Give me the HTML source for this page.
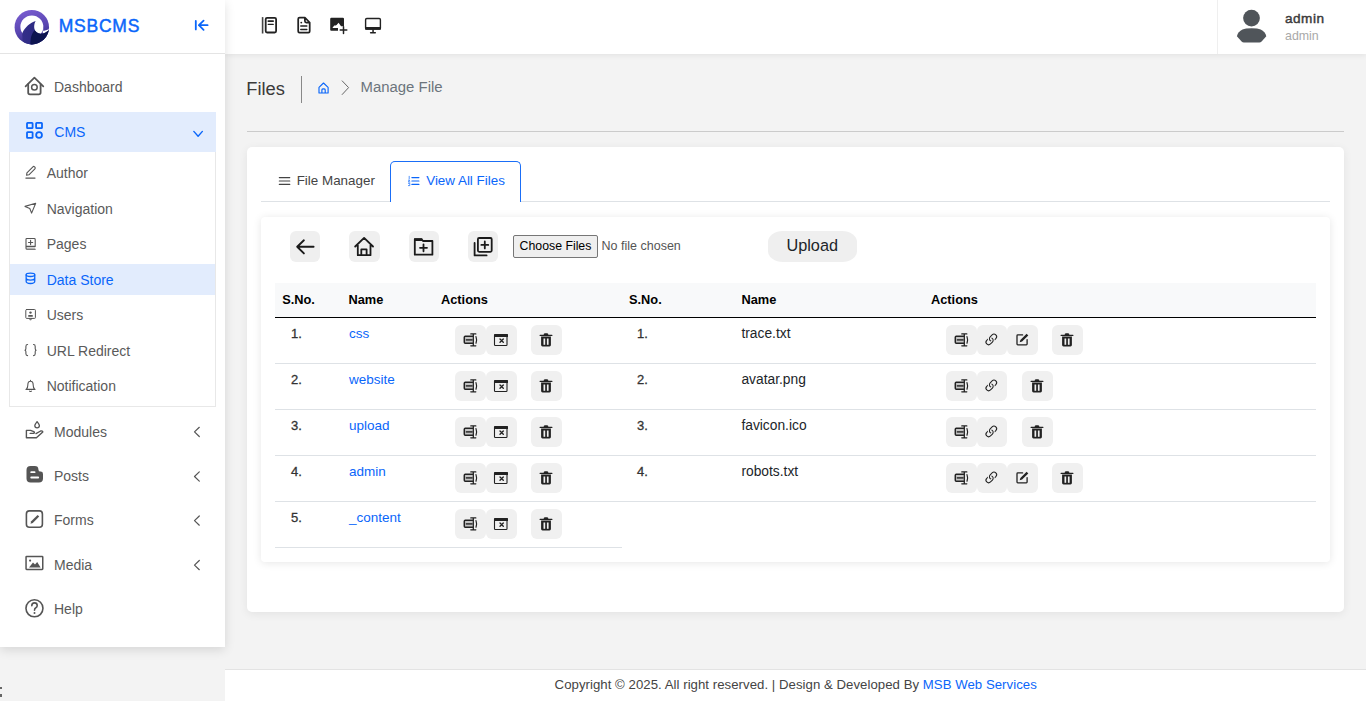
<!DOCTYPE html>
<html><head><meta charset="utf-8">
<style>
*{box-sizing:border-box;margin:0;padding:0}
html,body{width:1366px;height:701px;overflow:hidden;background:#f3f3f3;font-family:"Liberation Sans",sans-serif;}
.a{position:absolute}
.t{position:absolute;white-space:nowrap;line-height:1}
svg.i{position:absolute;left:0;top:0;overflow:visible}
</style></head><body>
<div class="a" style="left:225px;top:0px;width:1141px;height:54px;background:#fff;box-shadow:0 1px 6px rgba(0,0,0,.08)"></div>
<div class="a" style="left:1217px;top:0px;width:1px;height:54px;background:#efefef"></div>
<div class="a" style="left:0px;top:0px;width:225px;height:647px;background:#fff;box-shadow:0 3px 10px rgba(0,0,0,.12)"></div>
<div class="a" style="left:0px;top:53px;width:225px;height:1px;background:#e4e4e4"></div>
<div class="a" style="left:225px;top:669px;width:1141px;height:32px;background:#fff;border-top:1px solid #e3e3e3"></div>
<div class="t" style="left:58.8px;top:18.18px;font-size:17.5px;color:#0a66fa;letter-spacing:0.75px;-webkit-text-stroke:0.45px #0a66fa;">MSBCMS</div>
<div class="t" style="left:54px;top:80.25px;font-size:14px;color:#5a5a5a;">Dashboard</div>
<div class="a" style="left:9px;top:112px;width:207px;height:40px;background:#e2ecfd"></div>
<div class="t" style="left:54.3px;top:125.05px;font-size:14px;color:#0a66fa;">CMS</div>
<div class="a" style="left:9px;top:152px;width:207px;height:255px;border:1px solid #e8e8e8;border-top:none"></div>
<div class="a" style="left:10px;top:264px;width:205px;height:31px;background:#e2ecfd"></div>
<div class="t" style="left:46.7px;top:166.05px;font-size:14px;color:#5a5a5a;">Author</div>
<div class="t" style="left:46.7px;top:201.55px;font-size:14px;color:#5a5a5a;">Navigation</div>
<div class="t" style="left:46.7px;top:237.05px;font-size:14px;color:#5a5a5a;">Pages</div>
<div class="t" style="left:46.7px;top:272.55px;font-size:14px;color:#0a66fa;">Data Store</div>
<div class="t" style="left:46.7px;top:308.05px;font-size:14px;color:#5a5a5a;">Users</div>
<div class="t" style="left:46.7px;top:343.55px;font-size:14px;color:#5a5a5a;">URL Redirect</div>
<div class="t" style="left:46.7px;top:379.05px;font-size:14px;color:#5a5a5a;">Notification</div>
<div class="t" style="left:54px;top:425.15px;font-size:14px;color:#5a5a5a;">Modules</div>
<div class="t" style="left:54px;top:469.35px;font-size:14px;color:#5a5a5a;">Posts</div>
<div class="t" style="left:54px;top:513.15px;font-size:14px;color:#5a5a5a;">Forms</div>
<div class="t" style="left:54px;top:557.95px;font-size:14px;color:#5a5a5a;">Media</div>
<div class="t" style="left:54px;top:602.35px;font-size:14px;color:#5a5a5a;">Help</div>
<div class="a" style="left:0px;top:687.4px;width:1.6px;height:1.8px;background:#666"></div>
<div class="a" style="left:0px;top:693.6px;width:1.6px;height:3.3px;background:#666"></div>
<div class="t" style="left:1285px;top:11.98px;font-size:13.6px;color:#3b3b3b;-webkit-text-stroke:0.45px #3b3b3b;letter-spacing:0.5px;">admin</div>
<div class="t" style="left:1285px;top:30.10px;font-size:12.4px;color:#a9a9a9;">admin</div>
<div class="t" style="left:246.3px;top:80.11px;font-size:18.3px;color:#3a3a3a;">Files</div>
<div class="a" style="left:301px;top:76px;width:1px;height:27px;background:#888"></div>
<div class="t" style="left:360.6px;top:80.38px;font-size:14.9px;color:#6c757d;">Manage File</div>
<div class="a" style="left:247px;top:131px;width:1097px;height:1px;background:#cbcbcb"></div>
<div class="a" style="left:247px;top:147px;width:1097px;height:465px;background:#fff;border-radius:5px;box-shadow:0 2px 10px rgba(0,0,0,.07)"></div>
<div class="a" style="left:261px;top:201px;width:1069px;height:1px;background:#dee2e6"></div>
<div class="a" style="left:390px;top:161px;width:131px;height:41px;background:#fff;border:1px solid #1a6ef7;border-bottom:none;border-radius:5px 5px 0 0"></div>
<div class="t" style="left:296.7px;top:174.15px;font-size:13.4px;color:#444;">File Manager</div>
<div class="t" style="left:426.2px;top:174.15px;font-size:13.4px;color:#0a66fa;">View All Files</div>
<div class="a" style="left:261px;top:217px;width:1069px;height:345px;background:#fff;border-radius:4px;box-shadow:0 1px 8px rgba(0,0,0,.10)"></div>
<div class="a" style="left:290px;top:231px;width:30px;height:31px;background:#efefef;border-radius:6px"></div>
<div class="a" style="left:349px;top:231px;width:31px;height:31px;background:#efefef;border-radius:6px"></div>
<div class="a" style="left:409px;top:231px;width:30px;height:31px;background:#efefef;border-radius:6px"></div>
<div class="a" style="left:468px;top:231px;width:30px;height:31px;background:#efefef;border-radius:6px"></div>
<div class="a" style="left:513px;top:235px;width:85px;height:23px;background:#efefef;border:1px solid #767676;border-radius:2px"></div>
<div class="t" style="left:519.6px;top:240.09px;font-size:12.3px;color:#000;">Choose Files</div>
<div class="t" style="left:601.6px;top:240.22px;font-size:12.5px;color:#555;">No file chosen</div>
<div class="a" style="left:768px;top:231px;width:89px;height:31px;background:#efefef;border-radius:15px / 11px"></div>
<div class="t" style="left:786.4px;top:237.10px;font-size:16.3px;color:#212529;">Upload</div>
<div class="a" style="left:275px;top:283px;width:1041px;height:34px;background:#f8f9fa"></div>
<div class="a" style="left:275px;top:317px;width:1041px;height:1px;background:#000"></div>
<div class="t" style="left:282.2px;top:294.06px;font-size:12.8px;color:#000;font-weight:bold;">S.No.</div>
<div class="t" style="left:348.5px;top:294.06px;font-size:12.8px;color:#000;font-weight:bold;">Name</div>
<div class="t" style="left:441px;top:294.06px;font-size:12.8px;color:#000;font-weight:bold;">Actions</div>
<div class="t" style="left:629px;top:294.06px;font-size:12.8px;color:#000;font-weight:bold;">S.No.</div>
<div class="t" style="left:741.4px;top:294.06px;font-size:12.8px;color:#000;font-weight:bold;">Name</div>
<div class="t" style="left:931px;top:294.06px;font-size:12.8px;color:#000;font-weight:bold;">Actions</div>
<div class="a" style="left:275px;top:363px;width:1041px;height:1px;background:#dee2e6"></div>
<div class="a" style="left:275px;top:409px;width:1041px;height:1px;background:#dee2e6"></div>
<div class="a" style="left:275px;top:455px;width:1041px;height:1px;background:#dee2e6"></div>
<div class="a" style="left:275px;top:501px;width:1041px;height:1px;background:#dee2e6"></div>
<div class="a" style="left:275px;top:547px;width:347px;height:1px;background:#dee2e6"></div>
<div class="t" style="left:291px;top:326.79px;font-size:13px;color:#333;-webkit-text-stroke:0.3px #333;">1.</div>
<div class="t" style="left:349px;top:327.37px;font-size:13.5px;color:#0a66fa;">css</div>
<div class="a" style="left:455px;top:325px;width:31px;height:30px;background:#f0f0f0;border-radius:6px"></div>
<div class="a" style="left:486px;top:325px;width:31px;height:30px;background:#f0f0f0;border-radius:6px"></div>
<div class="a" style="left:531px;top:325px;width:31px;height:30px;background:#f0f0f0;border-radius:6px"></div>
<div class="t" style="left:291px;top:372.79px;font-size:13px;color:#333;-webkit-text-stroke:0.3px #333;">2.</div>
<div class="t" style="left:349px;top:373.37px;font-size:13.5px;color:#0a66fa;">website</div>
<div class="a" style="left:455px;top:371px;width:31px;height:30px;background:#f0f0f0;border-radius:6px"></div>
<div class="a" style="left:486px;top:371px;width:31px;height:30px;background:#f0f0f0;border-radius:6px"></div>
<div class="a" style="left:531px;top:371px;width:31px;height:30px;background:#f0f0f0;border-radius:6px"></div>
<div class="t" style="left:291px;top:418.79px;font-size:13px;color:#333;-webkit-text-stroke:0.3px #333;">3.</div>
<div class="t" style="left:349px;top:419.37px;font-size:13.5px;color:#0a66fa;">upload</div>
<div class="a" style="left:455px;top:417px;width:31px;height:30px;background:#f0f0f0;border-radius:6px"></div>
<div class="a" style="left:486px;top:417px;width:31px;height:30px;background:#f0f0f0;border-radius:6px"></div>
<div class="a" style="left:531px;top:417px;width:31px;height:30px;background:#f0f0f0;border-radius:6px"></div>
<div class="t" style="left:291px;top:464.79px;font-size:13px;color:#333;-webkit-text-stroke:0.3px #333;">4.</div>
<div class="t" style="left:349px;top:465.37px;font-size:13.5px;color:#0a66fa;">admin</div>
<div class="a" style="left:455px;top:463px;width:31px;height:30px;background:#f0f0f0;border-radius:6px"></div>
<div class="a" style="left:486px;top:463px;width:31px;height:30px;background:#f0f0f0;border-radius:6px"></div>
<div class="a" style="left:531px;top:463px;width:31px;height:30px;background:#f0f0f0;border-radius:6px"></div>
<div class="t" style="left:291px;top:510.79px;font-size:13px;color:#333;-webkit-text-stroke:0.3px #333;">5.</div>
<div class="t" style="left:349px;top:511.37px;font-size:13.5px;color:#0a66fa;">_content</div>
<div class="a" style="left:455px;top:509px;width:31px;height:30px;background:#f0f0f0;border-radius:6px"></div>
<div class="a" style="left:486px;top:509px;width:31px;height:30px;background:#f0f0f0;border-radius:6px"></div>
<div class="a" style="left:531px;top:509px;width:31px;height:30px;background:#f0f0f0;border-radius:6px"></div>
<div class="t" style="left:637px;top:326.79px;font-size:13px;color:#333;-webkit-text-stroke:0.3px #333;">1.</div>
<div class="t" style="left:741.4px;top:327.12px;font-size:13.8px;color:#212529;">trace.txt</div>
<div class="a" style="left:946px;top:325px;width:31px;height:30px;background:#f0f0f0;border-radius:6px"></div>
<div class="a" style="left:977px;top:325px;width:30px;height:30px;background:#f0f0f0;border-radius:6px"></div>
<div class="a" style="left:1007px;top:325px;width:31px;height:30px;background:#f0f0f0;border-radius:6px"></div>
<div class="a" style="left:1052px;top:325px;width:31px;height:30px;background:#f0f0f0;border-radius:6px"></div>
<div class="t" style="left:637px;top:372.79px;font-size:13px;color:#333;-webkit-text-stroke:0.3px #333;">2.</div>
<div class="t" style="left:741.4px;top:373.12px;font-size:13.8px;color:#212529;">avatar.png</div>
<div class="a" style="left:946px;top:371px;width:31px;height:30px;background:#f0f0f0;border-radius:6px"></div>
<div class="a" style="left:977px;top:371px;width:30px;height:30px;background:#f0f0f0;border-radius:6px"></div>
<div class="a" style="left:1022px;top:371px;width:31px;height:30px;background:#f0f0f0;border-radius:6px"></div>
<div class="t" style="left:637px;top:418.79px;font-size:13px;color:#333;-webkit-text-stroke:0.3px #333;">3.</div>
<div class="t" style="left:741.4px;top:419.12px;font-size:13.8px;color:#212529;">favicon.ico</div>
<div class="a" style="left:946px;top:417px;width:31px;height:30px;background:#f0f0f0;border-radius:6px"></div>
<div class="a" style="left:977px;top:417px;width:30px;height:30px;background:#f0f0f0;border-radius:6px"></div>
<div class="a" style="left:1022px;top:417px;width:31px;height:30px;background:#f0f0f0;border-radius:6px"></div>
<div class="t" style="left:637px;top:464.79px;font-size:13px;color:#333;-webkit-text-stroke:0.3px #333;">4.</div>
<div class="t" style="left:741.4px;top:465.12px;font-size:13.8px;color:#212529;">robots.txt</div>
<div class="a" style="left:946px;top:463px;width:31px;height:30px;background:#f0f0f0;border-radius:6px"></div>
<div class="a" style="left:977px;top:463px;width:30px;height:30px;background:#f0f0f0;border-radius:6px"></div>
<div class="a" style="left:1007px;top:463px;width:31px;height:30px;background:#f0f0f0;border-radius:6px"></div>
<div class="a" style="left:1052px;top:463px;width:31px;height:30px;background:#f0f0f0;border-radius:6px"></div>
<div class="t" style="left:554.6px;top:677.82px;font-size:13.2px;letter-spacing:0.04px;color:#444">Copyright © 2025. All right reserved. | Design &amp; Developed By <span style="color:#0a66fa">MSB Web Services</span></div>
<svg class="i" width="1366" height="701" viewBox="0 0 1366 701" fill="none" stroke-linecap="round" stroke-linejoin="round"><defs><linearGradient id="lg1" x1="0.2" y1="0" x2="0.5" y2="1"><stop offset="0" stop-color="#7a5dd1"/><stop offset="0.6" stop-color="#5845b0"/><stop offset="1" stop-color="#2e2a80"/></linearGradient><linearGradient id="lg2" x1="0" y1="0" x2="1" y2="0"><stop offset="0" stop-color="#3a3290"/><stop offset="1" stop-color="#25257a"/></linearGradient><clipPath id="cc"><circle cx="31.8" cy="27.2" r="17.2"/></clipPath><clipPath id="wv"><path d="M22.2 33.2 C25.5 27 30 22.8 35.7 21.1 C34.2 23.5 33.9 26.5 34.4 28.8 C35 31.5 37.5 33.6 40.5 33.7 C43.5 33.9 46.5 32.3 49.2 29.9 L52 50 L23.5 50 L22.6 40 Z"/></clipPath></defs><circle cx="31.8" cy="27.2" r="17.2" fill="url(#lg1)"/><circle cx="31.85" cy="26.85" r="11.45" fill="#fff"/><g clip-path="url(#cc)"><path d="M42.8 24 L43.3 31.1 L49.5 29 L49.8 32 L42.8 35.5 Z" fill="#fff"/><g clip-path="url(#wv)"><rect x="10" y="15" width="42" height="35" fill="url(#lg2)"/><path d="M30.3 45 C30.5 38 31.2 34.5 34.3 30.6 L52 29 L52 50 Z" fill="#0d1450"/></g></g><path d="M195.8 20.9 V29.4 M203.6 20.6 L198.9 25.2 L203.6 29.8 M198.9 25.2 H207.6" stroke="#0a66fa" stroke-width="1.8"/><rect x="261.8" y="17.1" width="1.6" height="16.4" fill="#444"/><rect x="265.7" y="17.8" width="10.4" height="14.7" rx="1.4" stroke="#222" stroke-width="1.8"/><path d="M268.3 21.1 H273.2" stroke="#222" stroke-width="1.7"/><path d="M268.3 24.4 H273.2" stroke="#222" stroke-width="1.3"/><path d="M299.6 17.7 H304.9 L309.7 22.5 V31.2 Q309.7 32.5 308.4 32.5 H299.5 Q298.2 32.5 298.2 31.2 V19.1 Q298.2 17.7 299.6 17.7 Z M304.9 17.7 V21.1 Q304.9 22.5 306.3 22.5 H309.7" stroke="#222" stroke-width="1.75"/><circle cx="301.3" cy="22.6" r="0.95" fill="#222"/><path d="M300.8 26 H306.8 M300.8 29.4 H306.8" stroke="#222" stroke-width="1.5"/><rect x="330.2" y="17.8" width="13.8" height="13" rx="1.1" fill="#222"/><path d="M332.4 28.1 L334.2 25.5 L335.7 25.6 L336.6 24.9 L338.6 22.7 L340.3 25.3 L341.2 26.3 L345 26.3 L345 35 L338 35 L338 28.1 Z" fill="#fff"/><path d="M343.5 26.8 V33.5 M340.2 30.1 H346.8" stroke="#222" stroke-width="1.5"/><rect x="365.6" y="18.5" width="14.8" height="10.6" rx="1.2" stroke="#222" stroke-width="1.4"/><rect x="365" y="27" width="16" height="2.7" rx="1" fill="#222"/><rect x="372.3" y="29.5" width="1.5" height="2.8" fill="#222"/><rect x="369.9" y="31.9" width="6.1" height="1.5" rx=".7" fill="#222"/><circle cx="1251.5" cy="18.1" r="8.4" fill="#50555a"/><path d="M1236.9 36.3 Q1238 31.5 1242.5 29.5 Q1245.5 28.2 1251.6 28.2 Q1257.7 28.2 1260.7 29.5 Q1265.2 31.5 1266.3 36.3 L1261.6 41.5 Q1260.6 42.6 1259.4 42.6 H1243.8 Q1242.6 42.6 1241.6 41.5 Z" fill="#50555a"/><path d="M25.6 86.3 L34.4 77.7 L43.3 86.3" stroke="#555" stroke-width="1.7"/><path d="M28.2 84.2 V92.6 Q28.2 94.4 30 94.4 H38.8 Q40.6 94.4 40.6 92.6 V84.2" stroke="#555" stroke-width="1.8"/><circle cx="34.4" cy="87.2" r="2.8" stroke="#555" stroke-width="1.5"/><rect x="27" y="122.8" width="5.6" height="5.4" rx=".6" stroke="#0a66fa" stroke-width="1.8"/><rect x="36.1" y="122.8" width="5.9" height="5.4" rx=".6" stroke="#0a66fa" stroke-width="1.8"/><rect x="27" y="132.1" width="5.6" height="5.7" rx=".6" stroke="#0a66fa" stroke-width="1.8"/><circle cx="39.05" cy="134.95" r="2.9" stroke="#0a66fa" stroke-width="1.8"/><path d="M193.8 131.4 L198.1 136.2 L202.4 131.4" stroke="#0a66fa" stroke-width="1.4"/><path d="M26.6 175.3 L26.9 172.8 L32.9 166.8 Q33.7 166 34.5 166.8 L34.9 167.2 Q35.7 168 34.9 168.8 L28.9 174.8 Z" stroke="#555" stroke-width="1.1"/><path d="M25.9 178.1 H35" stroke="#555" stroke-width="1.2"/><path d="M25 206.4 L35.7 203.3 L31.6 213.1 L29.8 208.5 Z" stroke="#555" stroke-width="1.1"/><rect x="26" y="246.4" width="9.2" height="2.9" fill="#d4d4d4"/><path d="M26.8 238.5 H34.3 Q35.2 238.5 35.2 239.4 V246.4 H26 V239.3 Q26 238.5 26.8 238.5 Z M26 246.4 V248.2 Q26 249.3 27.1 249.3 H35.2" stroke="#555" stroke-width="1.1"/><path d="M30.6 240.4 V244.6 M28.5 242.5 H32.7" stroke="#555" stroke-width="1.1"/><ellipse cx="30.45" cy="274.8" rx="4.3" ry="1.7" stroke="#0a66fa" stroke-width="1.3"/><path d="M26.15 274.8 V281.3 C26.15 284.2 34.75 284.2 34.75 281.3 V274.8 M26.15 278.1 C26.15 280.7 34.75 280.7 34.75 278.1" stroke="#0a66fa" stroke-width="1.3"/><rect x="25.8" y="309.5" width="9.6" height="8.9" rx=".8" stroke="#555" stroke-width="1"/><path d="M29.3 318.5 L30.5 320.2 L31.7 318.5" stroke="#555" stroke-width="1"/><circle cx="30.5" cy="312.6" r="1.2" fill="#555"/><rect x="28.2" y="314.9" width="4.6" height="1.8" rx=".5" fill="#555"/><path d="M27.6 344.5 Q25.9 344.5 25.9 346.4 V348.6 Q25.9 350 24.9 350.2 Q25.9 350.4 25.9 351.8 V353.8 Q25.9 355.6 27.6 355.6 M33.5 344.5 Q35.2 344.5 35.2 346.4 V348.6 Q35.2 350 36.2 350.2 Q35.2 350.4 35.2 351.8 V353.8 Q35.2 355.6 33.5 355.6" stroke="#555" stroke-width="1.1"/><path d="M26 389.4 H35 M26.3 389.3 Q27.8 387.8 27.8 385.2 Q27.8 381.3 30.5 381.3 Q33.2 381.3 33.2 385.2 Q33.2 387.8 34.7 389.3 M29.6 391.1 Q30.5 392 31.4 391.1 M30.5 380.4 V381.3" stroke="#555" stroke-width="1.1"/><path d="M37.1 421.6 Q34.8 424.5 34.8 425.6 Q34.8 427.8 37.1 427.8 Q39.4 427.8 39.4 425.6 Q39.4 424.5 37.1 421.6 Z" stroke="#555" stroke-width="1.3"/><path d="M26.4 430.4 H30.6 L33.8 431.6 Q35 432.6 33.8 433.4 H30.2 M26.4 430.4 V437.7 H36.4 L42.8 431.9 Q42.2 430.6 40.6 431 L36 433.6" stroke="#555" stroke-width="1.4"/><path d="M30.6 466 H34.8 Q38.4 466 38.4 469.4 Q38.4 471.6 40.6 471.6 Q43 471.6 43 474 V478.4 Q43 482.5 38.9 482.5 H30.6 Q26.5 482.5 26.5 478.4 V470.1 Q26.5 466 30.6 466 Z" fill="#555"/><rect x="30.3" y="471.2" width="5.2" height="1.9" rx=".95" fill="#fff"/><rect x="30.3" y="476.5" width="8.8" height="1.9" rx=".95" fill="#fff"/><rect x="26.4" y="510.9" width="16" height="16.3" rx="3" stroke="#555" stroke-width="1.6"/><path d="M30.5 523.8 L31.2 521.3 L37.6 514.9 L39.2 516.5 L32.8 522.9 Z" fill="#555"/><rect x="26.05" y="556.45" width="16.7" height="13" rx=".6" stroke="#555" stroke-width="1.5"/><path d="M29 567.6 L33 562.6 L35 564.6 L37.2 562 L40.6 567.6 Z" fill="#555"/><circle cx="30.1" cy="560.6" r="1.1" fill="#555"/><circle cx="34.45" cy="608.3" r="8.5" stroke="#555" stroke-width="1.6"/><path d="M31.8 605.8 Q31.8 602.9 34.5 602.9 Q37.2 602.9 37.2 605.5 Q37.2 607 35.8 607.8 Q34.5 608.5 34.5 610.2" stroke="#555" stroke-width="1.6"/><circle cx="34.5" cy="612.9" r="1" fill="#555"/><path d="M199.3 427.3 L194.5 431.9 L199.3 436.5" stroke="#555" stroke-width="1.2"/><path d="M199.3 471.9 L194.5 476.5 L199.3 481.1" stroke="#555" stroke-width="1.2"/><path d="M199.3 516.0 L194.5 520.6 L199.3 525.2" stroke="#555" stroke-width="1.2"/><path d="M199.3 560.5 L194.5 565.1 L199.3 569.7" stroke="#555" stroke-width="1.2"/><path d="M319 93 V87.4 L323.5 83 L328.1 87.4 V93 Z M321.9 93 V89.8 Q321.9 88.9 323.5 88.9 Q325.2 88.9 325.2 89.8 V93" stroke="#0a66fa" stroke-width="1.15"/><path d="M342.2 80.9 L348.6 87.6 L342.2 94.5" stroke="#666" stroke-width="1"/><path d="M279.3 177.6 H289.8 M279.3 181 H289.8 M279.3 184.4 H289.8" stroke="#444" stroke-width="1.1"/><path d="M411.9 177.6 H418.9 M411.9 181 H418.9 M411.9 184.4 H418.9" stroke="#0a66fa" stroke-width="1.2"/><path d="M409.2 176.3 V178.9 M408.4 180.2 H409.7 L408.4 182 H409.9 M408.4 183.3 H409.8 V185.6 H408.4" stroke="#0a66fa" stroke-width=".7"/><path d="M303.9 240.3 L297.2 246.8 L303.9 253.4 M297.2 246.8 H313.6" stroke="#1a1a1a" stroke-width="1.9"/><path d="M355.2 246.5 L364.1 237.9 L373 246.5 M357.8 245 V255.2 H370.5 V245 M361.3 255.2 V249.4 H366.6 V255.2" stroke="#1a1a1a" stroke-width="1.8"/><path d="M414.8 254.7 V239.2 H421.6 L423 241 H432.4 V254.7 Z" stroke="#1a1a1a" stroke-width="1.8"/><rect x="414.1" y="238.4" width="8.2" height="2.6" fill="#1a1a1a"/><path d="M423.5 244.3 V251.3 M420 247.8 H427" stroke="#1a1a1a" stroke-width="1.8"/><rect x="477.9" y="238" width="13.8" height="13.8" rx="1.2" stroke="#1a1a1a" stroke-width="1.8"/><path d="M484.8 241.5 V248.4 M481.35 244.95 H488.25 M474.6 243 V255.4 H486.6" stroke="#1a1a1a" stroke-width="1.8"/><g transform="translate(455,325)"><rect x="9.5" y="11.6" width="8.2" height="6.5" fill="#c4c4c4"/><path d="M17.6 11.3 H10.3 Q9.3 11.3 9.3 12.3 V17.3 Q9.3 18.3 10.3 18.3 H17.6" stroke="#222" stroke-width="1.5"/><rect x="10.8" y="14.2" width="6.8" height="1.4" fill="#222"/><path d="M18.3 8.9 V20.8 M15.8 8.9 H20.8 M15.8 20.8 H20.8" stroke="#222" stroke-width="1.3"/><path d="M21 11.6 Q22.2 14.9 21 18.2" stroke="#222" stroke-width="1.2"/></g><g transform="translate(486,325)"><rect x="8.5" y="9.5" width="12.5" height="11" rx=".8" stroke="#222" stroke-width="1.1"/><rect x="8.4" y="9" width="13.6" height="3" rx=".6" fill="#222"/><path d="M14 13.9 L17.3 17.2 M17.3 13.9 L14 17.2" stroke="#222" stroke-width="1.35"/></g><g transform="translate(531,325)"><path d="M9.1 10.3 H20.9" stroke="#222" stroke-width="1.3"/><path d="M12.6 10.3 Q12.6 8.3 13.8 8.3 H16.2 Q17.4 8.3 17.4 10.3 Z" fill="#222"/><path d="M10.1 11.6 H19.9 V20 Q19.9 21.4 18.5 21.4 H11.5 Q10.1 21.4 10.1 20 Z" fill="#222"/><rect x="12.5" y="13.5" width="1.7" height="6.3" fill="#f0f0f0"/><rect x="15.9" y="13.5" width="1.7" height="6.3" fill="#f0f0f0"/></g><g transform="translate(455,371)"><rect x="9.5" y="11.6" width="8.2" height="6.5" fill="#c4c4c4"/><path d="M17.6 11.3 H10.3 Q9.3 11.3 9.3 12.3 V17.3 Q9.3 18.3 10.3 18.3 H17.6" stroke="#222" stroke-width="1.5"/><rect x="10.8" y="14.2" width="6.8" height="1.4" fill="#222"/><path d="M18.3 8.9 V20.8 M15.8 8.9 H20.8 M15.8 20.8 H20.8" stroke="#222" stroke-width="1.3"/><path d="M21 11.6 Q22.2 14.9 21 18.2" stroke="#222" stroke-width="1.2"/></g><g transform="translate(486,371)"><rect x="8.5" y="9.5" width="12.5" height="11" rx=".8" stroke="#222" stroke-width="1.1"/><rect x="8.4" y="9" width="13.6" height="3" rx=".6" fill="#222"/><path d="M14 13.9 L17.3 17.2 M17.3 13.9 L14 17.2" stroke="#222" stroke-width="1.35"/></g><g transform="translate(531,371)"><path d="M9.1 10.3 H20.9" stroke="#222" stroke-width="1.3"/><path d="M12.6 10.3 Q12.6 8.3 13.8 8.3 H16.2 Q17.4 8.3 17.4 10.3 Z" fill="#222"/><path d="M10.1 11.6 H19.9 V20 Q19.9 21.4 18.5 21.4 H11.5 Q10.1 21.4 10.1 20 Z" fill="#222"/><rect x="12.5" y="13.5" width="1.7" height="6.3" fill="#f0f0f0"/><rect x="15.9" y="13.5" width="1.7" height="6.3" fill="#f0f0f0"/></g><g transform="translate(455,417)"><rect x="9.5" y="11.6" width="8.2" height="6.5" fill="#c4c4c4"/><path d="M17.6 11.3 H10.3 Q9.3 11.3 9.3 12.3 V17.3 Q9.3 18.3 10.3 18.3 H17.6" stroke="#222" stroke-width="1.5"/><rect x="10.8" y="14.2" width="6.8" height="1.4" fill="#222"/><path d="M18.3 8.9 V20.8 M15.8 8.9 H20.8 M15.8 20.8 H20.8" stroke="#222" stroke-width="1.3"/><path d="M21 11.6 Q22.2 14.9 21 18.2" stroke="#222" stroke-width="1.2"/></g><g transform="translate(486,417)"><rect x="8.5" y="9.5" width="12.5" height="11" rx=".8" stroke="#222" stroke-width="1.1"/><rect x="8.4" y="9" width="13.6" height="3" rx=".6" fill="#222"/><path d="M14 13.9 L17.3 17.2 M17.3 13.9 L14 17.2" stroke="#222" stroke-width="1.35"/></g><g transform="translate(531,417)"><path d="M9.1 10.3 H20.9" stroke="#222" stroke-width="1.3"/><path d="M12.6 10.3 Q12.6 8.3 13.8 8.3 H16.2 Q17.4 8.3 17.4 10.3 Z" fill="#222"/><path d="M10.1 11.6 H19.9 V20 Q19.9 21.4 18.5 21.4 H11.5 Q10.1 21.4 10.1 20 Z" fill="#222"/><rect x="12.5" y="13.5" width="1.7" height="6.3" fill="#f0f0f0"/><rect x="15.9" y="13.5" width="1.7" height="6.3" fill="#f0f0f0"/></g><g transform="translate(455,463)"><rect x="9.5" y="11.6" width="8.2" height="6.5" fill="#c4c4c4"/><path d="M17.6 11.3 H10.3 Q9.3 11.3 9.3 12.3 V17.3 Q9.3 18.3 10.3 18.3 H17.6" stroke="#222" stroke-width="1.5"/><rect x="10.8" y="14.2" width="6.8" height="1.4" fill="#222"/><path d="M18.3 8.9 V20.8 M15.8 8.9 H20.8 M15.8 20.8 H20.8" stroke="#222" stroke-width="1.3"/><path d="M21 11.6 Q22.2 14.9 21 18.2" stroke="#222" stroke-width="1.2"/></g><g transform="translate(486,463)"><rect x="8.5" y="9.5" width="12.5" height="11" rx=".8" stroke="#222" stroke-width="1.1"/><rect x="8.4" y="9" width="13.6" height="3" rx=".6" fill="#222"/><path d="M14 13.9 L17.3 17.2 M17.3 13.9 L14 17.2" stroke="#222" stroke-width="1.35"/></g><g transform="translate(531,463)"><path d="M9.1 10.3 H20.9" stroke="#222" stroke-width="1.3"/><path d="M12.6 10.3 Q12.6 8.3 13.8 8.3 H16.2 Q17.4 8.3 17.4 10.3 Z" fill="#222"/><path d="M10.1 11.6 H19.9 V20 Q19.9 21.4 18.5 21.4 H11.5 Q10.1 21.4 10.1 20 Z" fill="#222"/><rect x="12.5" y="13.5" width="1.7" height="6.3" fill="#f0f0f0"/><rect x="15.9" y="13.5" width="1.7" height="6.3" fill="#f0f0f0"/></g><g transform="translate(455,509)"><rect x="9.5" y="11.6" width="8.2" height="6.5" fill="#c4c4c4"/><path d="M17.6 11.3 H10.3 Q9.3 11.3 9.3 12.3 V17.3 Q9.3 18.3 10.3 18.3 H17.6" stroke="#222" stroke-width="1.5"/><rect x="10.8" y="14.2" width="6.8" height="1.4" fill="#222"/><path d="M18.3 8.9 V20.8 M15.8 8.9 H20.8 M15.8 20.8 H20.8" stroke="#222" stroke-width="1.3"/><path d="M21 11.6 Q22.2 14.9 21 18.2" stroke="#222" stroke-width="1.2"/></g><g transform="translate(486,509)"><rect x="8.5" y="9.5" width="12.5" height="11" rx=".8" stroke="#222" stroke-width="1.1"/><rect x="8.4" y="9" width="13.6" height="3" rx=".6" fill="#222"/><path d="M14 13.9 L17.3 17.2 M17.3 13.9 L14 17.2" stroke="#222" stroke-width="1.35"/></g><g transform="translate(531,509)"><path d="M9.1 10.3 H20.9" stroke="#222" stroke-width="1.3"/><path d="M12.6 10.3 Q12.6 8.3 13.8 8.3 H16.2 Q17.4 8.3 17.4 10.3 Z" fill="#222"/><path d="M10.1 11.6 H19.9 V20 Q19.9 21.4 18.5 21.4 H11.5 Q10.1 21.4 10.1 20 Z" fill="#222"/><rect x="12.5" y="13.5" width="1.7" height="6.3" fill="#f0f0f0"/><rect x="15.9" y="13.5" width="1.7" height="6.3" fill="#f0f0f0"/></g><g transform="translate(946,325)"><rect x="9.5" y="11.6" width="8.2" height="6.5" fill="#c4c4c4"/><path d="M17.6 11.3 H10.3 Q9.3 11.3 9.3 12.3 V17.3 Q9.3 18.3 10.3 18.3 H17.6" stroke="#222" stroke-width="1.5"/><rect x="10.8" y="14.2" width="6.8" height="1.4" fill="#222"/><path d="M18.3 8.9 V20.8 M15.8 8.9 H20.8 M15.8 20.8 H20.8" stroke="#222" stroke-width="1.3"/><path d="M21 11.6 Q22.2 14.9 21 18.2" stroke="#222" stroke-width="1.2"/></g><g transform="translate(982.9,331.6) scale(1.05)" fill="#222" stroke="none"><path d="M4.715 6.542 3.343 7.914a3 3 0 1 0 4.243 4.243l1.828-1.829A3 3 0 0 0 8.586 5.5L8 6.086a1 1 0 0 0-.154.199 2 2 0 0 1 .861 3.337L6.88 11.45a2 2 0 1 1-2.83-2.83l.793-.792a4 4 0 0 1-.128-1.287z"/><path d="M6.586 4.672A3 3 0 0 0 7.414 9.5l.775-.776a2 2 0 0 1-.896-3.346L9.12 3.55a2 2 0 1 1 2.83 2.83l-.793.792c.112.42.155.855.128 1.287l1.372-1.372a3 3 0 1 0-4.243-4.243z"/></g><g transform="translate(1007,325)"><path d="M15.6 9.9 H10.8 Q10 9.9 10 10.7 V19.1 Q10 19.9 10.8 19.9 H19.3 Q20.1 19.9 20.1 19.1 V14.6" stroke="#222" stroke-width="1.3"/><path d="M12.7 17.3 L13.4 14.9 L19.6 8.7 L21.3 10.4 L15.1 16.6 Z" fill="#222"/></g><g transform="translate(1052,325)"><path d="M9.1 10.3 H20.9" stroke="#222" stroke-width="1.3"/><path d="M12.6 10.3 Q12.6 8.3 13.8 8.3 H16.2 Q17.4 8.3 17.4 10.3 Z" fill="#222"/><path d="M10.1 11.6 H19.9 V20 Q19.9 21.4 18.5 21.4 H11.5 Q10.1 21.4 10.1 20 Z" fill="#222"/><rect x="12.5" y="13.5" width="1.7" height="6.3" fill="#f0f0f0"/><rect x="15.9" y="13.5" width="1.7" height="6.3" fill="#f0f0f0"/></g><g transform="translate(946,371)"><rect x="9.5" y="11.6" width="8.2" height="6.5" fill="#c4c4c4"/><path d="M17.6 11.3 H10.3 Q9.3 11.3 9.3 12.3 V17.3 Q9.3 18.3 10.3 18.3 H17.6" stroke="#222" stroke-width="1.5"/><rect x="10.8" y="14.2" width="6.8" height="1.4" fill="#222"/><path d="M18.3 8.9 V20.8 M15.8 8.9 H20.8 M15.8 20.8 H20.8" stroke="#222" stroke-width="1.3"/><path d="M21 11.6 Q22.2 14.9 21 18.2" stroke="#222" stroke-width="1.2"/></g><g transform="translate(982.9,377.6) scale(1.05)" fill="#222" stroke="none"><path d="M4.715 6.542 3.343 7.914a3 3 0 1 0 4.243 4.243l1.828-1.829A3 3 0 0 0 8.586 5.5L8 6.086a1 1 0 0 0-.154.199 2 2 0 0 1 .861 3.337L6.88 11.45a2 2 0 1 1-2.83-2.83l.793-.792a4 4 0 0 1-.128-1.287z"/><path d="M6.586 4.672A3 3 0 0 0 7.414 9.5l.775-.776a2 2 0 0 1-.896-3.346L9.12 3.55a2 2 0 1 1 2.83 2.83l-.793.792c.112.42.155.855.128 1.287l1.372-1.372a3 3 0 1 0-4.243-4.243z"/></g><g transform="translate(1022,371)"><path d="M9.1 10.3 H20.9" stroke="#222" stroke-width="1.3"/><path d="M12.6 10.3 Q12.6 8.3 13.8 8.3 H16.2 Q17.4 8.3 17.4 10.3 Z" fill="#222"/><path d="M10.1 11.6 H19.9 V20 Q19.9 21.4 18.5 21.4 H11.5 Q10.1 21.4 10.1 20 Z" fill="#222"/><rect x="12.5" y="13.5" width="1.7" height="6.3" fill="#f0f0f0"/><rect x="15.9" y="13.5" width="1.7" height="6.3" fill="#f0f0f0"/></g><g transform="translate(946,417)"><rect x="9.5" y="11.6" width="8.2" height="6.5" fill="#c4c4c4"/><path d="M17.6 11.3 H10.3 Q9.3 11.3 9.3 12.3 V17.3 Q9.3 18.3 10.3 18.3 H17.6" stroke="#222" stroke-width="1.5"/><rect x="10.8" y="14.2" width="6.8" height="1.4" fill="#222"/><path d="M18.3 8.9 V20.8 M15.8 8.9 H20.8 M15.8 20.8 H20.8" stroke="#222" stroke-width="1.3"/><path d="M21 11.6 Q22.2 14.9 21 18.2" stroke="#222" stroke-width="1.2"/></g><g transform="translate(982.9,423.6) scale(1.05)" fill="#222" stroke="none"><path d="M4.715 6.542 3.343 7.914a3 3 0 1 0 4.243 4.243l1.828-1.829A3 3 0 0 0 8.586 5.5L8 6.086a1 1 0 0 0-.154.199 2 2 0 0 1 .861 3.337L6.88 11.45a2 2 0 1 1-2.83-2.83l.793-.792a4 4 0 0 1-.128-1.287z"/><path d="M6.586 4.672A3 3 0 0 0 7.414 9.5l.775-.776a2 2 0 0 1-.896-3.346L9.12 3.55a2 2 0 1 1 2.83 2.83l-.793.792c.112.42.155.855.128 1.287l1.372-1.372a3 3 0 1 0-4.243-4.243z"/></g><g transform="translate(1022,417)"><path d="M9.1 10.3 H20.9" stroke="#222" stroke-width="1.3"/><path d="M12.6 10.3 Q12.6 8.3 13.8 8.3 H16.2 Q17.4 8.3 17.4 10.3 Z" fill="#222"/><path d="M10.1 11.6 H19.9 V20 Q19.9 21.4 18.5 21.4 H11.5 Q10.1 21.4 10.1 20 Z" fill="#222"/><rect x="12.5" y="13.5" width="1.7" height="6.3" fill="#f0f0f0"/><rect x="15.9" y="13.5" width="1.7" height="6.3" fill="#f0f0f0"/></g><g transform="translate(946,463)"><rect x="9.5" y="11.6" width="8.2" height="6.5" fill="#c4c4c4"/><path d="M17.6 11.3 H10.3 Q9.3 11.3 9.3 12.3 V17.3 Q9.3 18.3 10.3 18.3 H17.6" stroke="#222" stroke-width="1.5"/><rect x="10.8" y="14.2" width="6.8" height="1.4" fill="#222"/><path d="M18.3 8.9 V20.8 M15.8 8.9 H20.8 M15.8 20.8 H20.8" stroke="#222" stroke-width="1.3"/><path d="M21 11.6 Q22.2 14.9 21 18.2" stroke="#222" stroke-width="1.2"/></g><g transform="translate(982.9,469.6) scale(1.05)" fill="#222" stroke="none"><path d="M4.715 6.542 3.343 7.914a3 3 0 1 0 4.243 4.243l1.828-1.829A3 3 0 0 0 8.586 5.5L8 6.086a1 1 0 0 0-.154.199 2 2 0 0 1 .861 3.337L6.88 11.45a2 2 0 1 1-2.83-2.83l.793-.792a4 4 0 0 1-.128-1.287z"/><path d="M6.586 4.672A3 3 0 0 0 7.414 9.5l.775-.776a2 2 0 0 1-.896-3.346L9.12 3.55a2 2 0 1 1 2.83 2.83l-.793.792c.112.42.155.855.128 1.287l1.372-1.372a3 3 0 1 0-4.243-4.243z"/></g><g transform="translate(1007,463)"><path d="M15.6 9.9 H10.8 Q10 9.9 10 10.7 V19.1 Q10 19.9 10.8 19.9 H19.3 Q20.1 19.9 20.1 19.1 V14.6" stroke="#222" stroke-width="1.3"/><path d="M12.7 17.3 L13.4 14.9 L19.6 8.7 L21.3 10.4 L15.1 16.6 Z" fill="#222"/></g><g transform="translate(1052,463)"><path d="M9.1 10.3 H20.9" stroke="#222" stroke-width="1.3"/><path d="M12.6 10.3 Q12.6 8.3 13.8 8.3 H16.2 Q17.4 8.3 17.4 10.3 Z" fill="#222"/><path d="M10.1 11.6 H19.9 V20 Q19.9 21.4 18.5 21.4 H11.5 Q10.1 21.4 10.1 20 Z" fill="#222"/><rect x="12.5" y="13.5" width="1.7" height="6.3" fill="#f0f0f0"/><rect x="15.9" y="13.5" width="1.7" height="6.3" fill="#f0f0f0"/></g></svg>
</body></html>
